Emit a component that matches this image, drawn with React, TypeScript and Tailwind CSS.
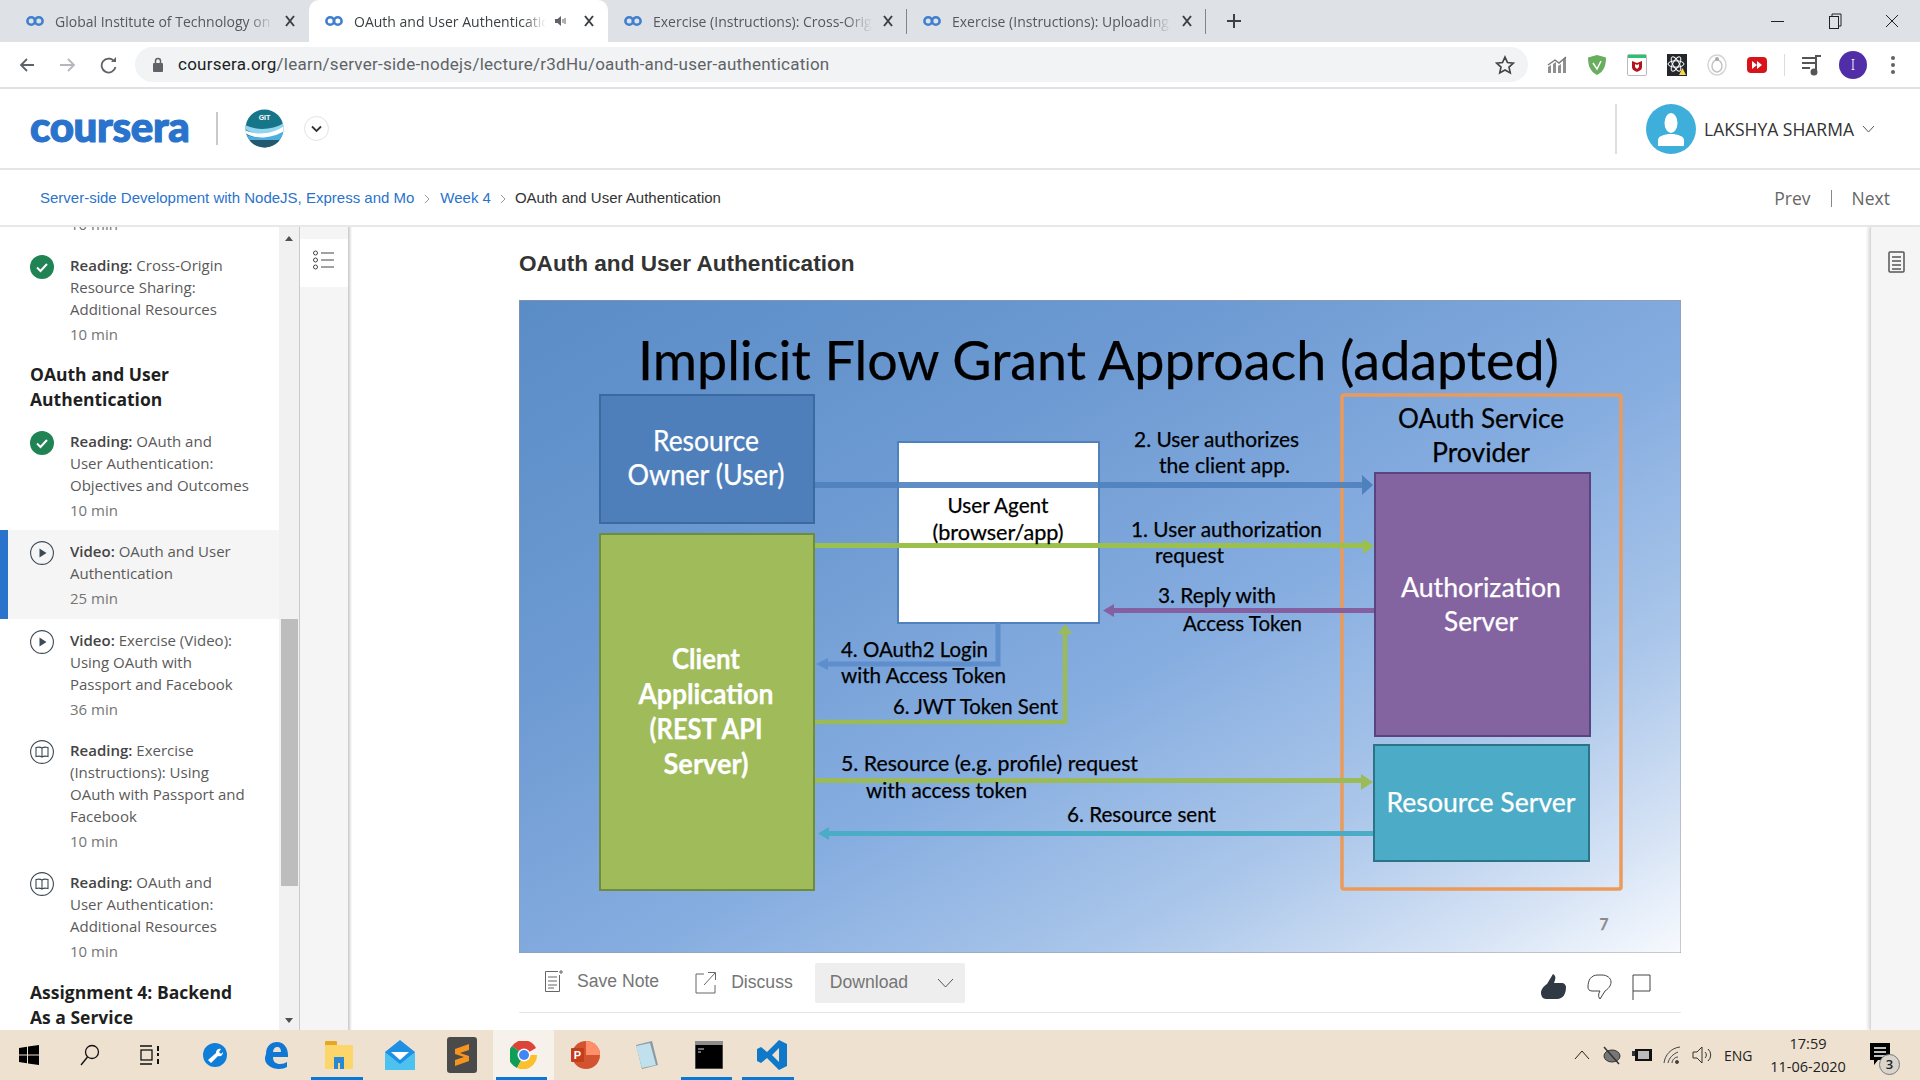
import React from "react";

const Co = () => (
  <svg width="18" height="12" viewBox="0 0 18 12" fill="none" stroke="#3f7fd0" strokeWidth="2.6">
    <circle cx="5.2" cy="6" r="3.8" />
    <circle cx="12.8" cy="6" r="3.8" />
  </svg>
);
const CloseX = () => (
  <svg width="10" height="12" viewBox="0 0 10 12" fill="none" stroke="#3c4043" strokeWidth="2">
    <path d="M1 1l8 10M9 1L1 11" />
  </svg>
);

function Tab({ title, active, audio, sep }: { title: string; active?: boolean; audio?: boolean; sep?: boolean }) {
  return (
    <div className={`relative flex h-[42px] w-[299px] shrink-0 items-center pl-[16px] ${active ? "rounded-t-[10px] bg-white" : ""}`}>
      <Co />
      <div className={`ml-[11px] overflow-hidden whitespace-nowrap text-[14px] [mask-image:linear-gradient(to_right,black_88%,transparent)] ${audio ? "w-[192px] text-[#3c4043]" : "w-[219px] text-[#55585c]"}`}>
        {title}
      </div>
      {audio && (
        <svg className="ml-[9px]" width="12" height="12" viewBox="0 0 12 12">
          <path d="M0 4h2.5L6 1v10L2.5 8H0z" fill="#5f6368" />
          <path d="M8 4v4M10 3v6" stroke="#5f6368" strokeWidth="1" />
        </svg>
      )}
      <div className="absolute left-[275px] top-[15px]">
        <CloseX />
      </div>
      {sep && <div className="absolute right-0 top-[9px] h-[25px] w-px bg-[#80868b]" />}
    </div>
  );
}

const ExtChart = () => (
  <svg width="20" height="20" viewBox="0 0 20 20">
    <path d="M1 18V12l3-2v8zM6 18V9l3-2v11zM11 18V11l3-2v9zM16 18V4l3-2v16z" fill="#8f8f8f" />
    <path d="M1 10l7-5 4 3 7-6" stroke="#777" strokeWidth="1.4" fill="none" />
  </svg>
);
const ExtShield = () => (
  <svg width="20" height="22" viewBox="0 0 20 22">
    <path d="M10 1l9 2.5c0 8-2 14-9 17.5C3 17.500 1 11.500 1 3.500z" fill="#68ae5e" />
    <path d="M6 9l4 6 4-8" stroke="#fff" strokeWidth="1.5" fill="none" />
  </svg>
);
const ExtMc = () => (
  <svg width="20" height="22" viewBox="0 0 20 22">
    <rect x="0.500" y="0.500" width="19" height="21" rx="1.500" fill="#fff" stroke="#bbb" />
    <rect x="1" y="1" width="18" height="3" fill="#25c46f" />
    <path d="M5 7l5 2 5-2v6c0 3-3 4-5 5-2-1-5-2-5-5z" fill="#b5121b" />
    <path d="M8 10l2 1 2-1v3l-2 2-2-2z" fill="#fff" />
  </svg>
);
const ExtReact = () => (
  <svg width="20" height="22" viewBox="0 0 20 22">
    <rect width="20" height="22" fill="#23272c" />
    <g fill="none" stroke="#fff" strokeWidth="1">
      <ellipse cx="9" cy="10" rx="8" ry="3.200" transform="rotate(60 9 10)" />
      <ellipse cx="9" cy="10" rx="8" ry="3.200" transform="rotate(120 9 10)" />
      <ellipse cx="9" cy="10" rx="8" ry="3.200" />
    </g>
    <path d="M12 21l3.500-7 3.500 7z" fill="#f7d747" />
  </svg>
);
const ExtCircle = () => (
  <svg width="20" height="22" viewBox="0 0 20 22" fill="none">
    <ellipse cx="10" cy="11" rx="9" ry="10" stroke="#d5d5d5" strokeWidth="1.500" />
    <ellipse cx="10" cy="12" rx="5" ry="6" stroke="#c4c4c4" strokeWidth="1.500" />
    <circle cx="10" cy="5" r="2" fill="#aaa" />
  </svg>
);
const ExtRed = () => (
  <svg width="20" height="20" viewBox="0 0 20 20">
    <rect x="0" y="2" width="20" height="16" rx="4" fill="#d7141a" />
    <path d="M5 6l5 4-5 4zM10 6l5 4-5 4z" fill="#fff" />
  </svg>
);

function Extension({ children }: { children: React.ReactNode }) {
  return <div className="flex w-[40px] shrink-0 items-center justify-center">{children}</div>;
}

const CheckIcon = () => (
  <svg width="24" height="24" viewBox="0 0 24 24">
    <circle cx="12" cy="12" r="12" fill="#1f8354" />
    <path d="M7 12.500l3.500 3.500L17 9" stroke="#fff" strokeWidth="2" fill="none" />
  </svg>
);
const PlayIcon = () => (
  <svg width="24" height="24" viewBox="0 0 24 24">
    <circle cx="12" cy="12" r="11.400" fill="none" stroke="#3c4a55" strokeWidth="1.100" />
    <path d="M9.500 7.500l7 4.500-7 4.500z" fill="#3c4a55" />
  </svg>
);
const BookIcon = () => (
  <svg width="24" height="24" viewBox="0 0 24 24" fill="none" stroke="#3c4a55" strokeWidth="1.100">
    <circle cx="12" cy="12" r="11.400" />
    <path d="M12 8c-1.500-1-4-1-6-.5v9c2-.5 4.500-.5 6 .5 1.500-1 4-1 6-.5v-9c-2-.5-4.500-.5-6 .5zM12 8v9" />
  </svg>
);

function Item({ icon, kind, title, time, active, tall }: { icon: React.ReactNode; kind: string; title: React.ReactNode; time: string; active?: boolean; tall?: boolean }) {
  return (
    <div className={`relative flex pl-[30px] pt-[10px] ${tall ? "pb-[10px]" : "pb-[9px]"} ${active ? "bg-[#f5f5f5]" : ""}`}>
      {active && <div className="absolute bottom-0 left-0 top-0 w-[8px] bg-[#2a73cc]" />}
      <div className="mt-[1px] w-[40px] shrink-0">{icon}</div>
      <div className="w-[205px] whitespace-nowrap">
        <div className="text-[15px] leading-[22px] text-[#5a5a5a]">
          <span className="font-semibold text-[#444]">{kind}:</span> {title}
        </div>
        <div className="mt-[3px] text-[15px] leading-[22px] text-[#757575]">{time}</div>
      </div>
    </div>
  );
}

function Heading({ children, extra }: { children: React.ReactNode; extra: string }) {
  return <div className={`whitespace-nowrap pb-[8px] pl-[30px] text-[17.5px] font-bold leading-[25px] text-[#1f1f1f] ${extra}`}>{children}</div>;
}

function Sidebar() {
  return (
    <div className="flex h-full w-[352px] shrink-0">
      <div className="h-full w-[279px] shrink-0 overflow-hidden bg-white font-['Open_Sans',sans-serif]">
        <div className="mt-[-14px] pb-[9px] pl-[70px] text-[15px] leading-[22px] text-[#757575]">10 min</div>
        <Item icon={<CheckIcon />} kind="Reading" title={<>Cross-Origin<br />Resource Sharing:<br />Additional Resources</>} time="10 min" />
        <Heading extra="pt-[8px]">OAuth and User<br />Authentication</Heading>
        <Item icon={<CheckIcon />} kind="Reading" title={<>OAuth and<br />User Authentication:<br />Objectives and Outcomes</>} time="10 min" />
        <Item active tall icon={<PlayIcon />} kind="Video" title={<>OAuth and User<br />Authentication</>} time="25 min" />
        <Item icon={<PlayIcon />} kind="Video" title={<>Exercise (Video):<br />Using OAuth with<br />Passport and Facebook</>} time="36 min" />
        <Item icon={<BookIcon />} kind="Reading" title={<>Exercise<br />(Instructions): Using<br />OAuth with Passport and<br />Facebook</>} time="10 min" />
        <Item icon={<BookIcon />} kind="Reading" title={<>OAuth and<br />User Authentication:<br />Additional Resources</>} time="10 min" />
        <Heading extra="pt-[9px]">Assignment 4: Backend<br />As a Service</Heading>
      </div>
      <div className="relative h-full w-[21px] shrink-0 border-r border-[#c9c9c9] bg-[#f1f1f1]">
        <div className="absolute left-[6px] top-[9px] h-0 w-0 border-x-[4.500px] border-b-[5px] border-x-transparent border-b-[#505050]" />
        <div className="ml-[2px] mt-[392px] h-[267px] w-[17px] bg-[#bdbdbd]" />
        <div className="absolute bottom-[7px] left-[6px] h-0 w-0 border-x-[4.500px] border-t-[5px] border-x-transparent border-t-[#505050]" />
      </div>
      <div className="h-full w-[48px] shrink-0 bg-[#f5f5f5] pt-[12px]">
        <div className="flex h-[48px] items-center justify-center bg-white pb-[6px]">
          <svg width="22" height="20" viewBox="0 0 22 20" fill="none" stroke="#444" strokeWidth="1">
            <circle cx="2.500" cy="3" r="2" />
            <circle cx="2.500" cy="10" r="2" />
            <circle cx="2.500" cy="17" r="2" />
            <path d="M8 3h13M8 10h13M8 17h13" />
          </svg>
        </div>
      </div>
      <div className="h-full w-[4px] shrink-0 bg-gradient-to-r from-[#c8c8c8] to-white" />
    </div>
  );
}

function ST({ x, y, w, size, fill = "#000", mid, bold, children }: { x: number; y: number; w: number; size: number; fill?: string; mid?: boolean; bold?: boolean; children: string }) {
  return (
    <text x={x} y={y} textLength={w} lengthAdjust="spacingAndGlyphs" fontSize={size} fill={fill} stroke={fill} strokeWidth={0.25} textAnchor={mid ? "middle" : "start"} fontWeight={bold ? 700 : 400} fontFamily="Lato, sans-serif">
      {children}
    </text>
  );
}

function Slide() {
  return (
    <svg width="1162" height="653" viewBox="519 300 1162 653" className="block">
      <defs>
        <linearGradient id="bg" x1="0" y1="0" x2="1" y2="1">
          <stop offset="0" stopColor="#5a8cc6" />
          <stop offset="0.3" stopColor="#6d9ad2" />
          <stop offset="0.55" stopColor="#86ade0" />
          <stop offset="0.75" stopColor="#aac6ea" />
          <stop offset="0.9" stopColor="#d6e3f5" />
          <stop offset="1" stopColor="#f7fafe" />
        </linearGradient>
      </defs>
      <rect x="519" y="300" width="1162" height="653" fill="url(#bg)" stroke="#9a9a9a" />
      <ST x={638} y={380} w={921} size={54}>Implicit Flow Grant Approach (adapted)</ST>

      <rect x="1342" y="395" width="279" height="494" rx="2" fill="none" stroke="#ec9a5a" strokeWidth="3.500" />

      <rect x="898" y="442" width="201" height="181" fill="#fff" stroke="#4f81bd" strokeWidth="2" />

      <rect x="814" y="482" width="550" height="6" fill="#4f81bd" fillOpacity="0.9" />
      <path d="M1362 475l11 10-11 10z" fill="#4f81bd" />
      <rect x="814" y="543" width="550" height="5" fill="#9bc04c" />
      <path d="M1363 539l11 7-11 8z" fill="#9bc04c" />
      <rect x="1112" y="608" width="262" height="5" fill="#8560a0" />
      <path d="M1114 604l-11 6.500 11 6.500z" fill="#8560a0" />

      <path d="M998 623v41H826" fill="none" stroke="#5e8ecb" strokeWidth="5" />
      <path d="M828 658l-12 6 12 6z" fill="#5e8ecb" />
      <path d="M814 722h251v-90" fill="none" stroke="#9bbb59" strokeWidth="4.500" />
      <path d="M1058 634l7-10 7 10z" fill="#9bbb59" />
      <rect x="814" y="778" width="550" height="5" fill="#9bbb59" />
      <path d="M1361 774l12 8-12 8z" fill="#9bbb59" />
      <rect x="826" y="831" width="548" height="5" fill="#4bacc6" />
      <path d="M829 827l-11 6.500 11 6.500z" fill="#4bacc6" />

      <rect x="600" y="395" width="214" height="128" fill="#4f7fbb" stroke="#3b6aa0" strokeWidth="2" />
      <rect x="600" y="534" width="214" height="356" fill="#9fbb5a" stroke="#6f8c3a" strokeWidth="2" />
      <rect x="1375" y="473" width="215" height="263" fill="#8463a1" stroke="#5a4480" strokeWidth="2" />
      <rect x="1374" y="745" width="215" height="116" fill="#4cabc6" stroke="#2b7486" strokeWidth="2" />

      <ST mid x={706} y={451} w={106} size={28} fill="#fff">Resource</ST>
      <ST mid x={706} y={485} w={157} size={28} fill="#fff">Owner (User)</ST>
      <ST mid x={998} y={513} w={101} size={21}>User Agent</ST>
      <ST mid x={998} y={540} w={131} size={21}>(browser/app)</ST>
      <ST mid bold x={706} y={669} w={68} size={28} fill="#fff">Client</ST>
      <ST mid bold x={706} y={704} w={135} size={28} fill="#fff">Application</ST>
      <ST mid bold x={706} y={739} w={113} size={28} fill="#fff">(REST API</ST>
      <ST mid bold x={706} y={774} w={85} size={28} fill="#fff">Server)</ST>
      <ST x={841} y={657} w={147} size={21}>4. OAuth2 Login</ST>
      <ST x={841} y={683} w={165} size={21}>with Access Token</ST>
      <ST x={893} y={714} w={165} size={21}>6. JWT Token Sent</ST>
      <ST x={841} y={771} w={297} size={21}>5. Resource (e.g. profile) request</ST>
      <ST x={866} y={798} w={161} size={21}>with access token</ST>
      <ST x={1067} y={822} w={149} size={21}>6. Resource sent</ST>
      <ST x={1134} y={447} w={165} size={21}>2. User authorizes</ST>
      <ST x={1159} y={473} w={131} size={21}>the client app.</ST>
      <ST x={1131} y={537} w={191} size={21}>1. User authorization</ST>
      <ST x={1155} y={563} w={69} size={21}>request</ST>
      <ST x={1158} y={603} w={118} size={21}>3. Reply with</ST>
      <ST x={1183} y={631} w={119} size={21}>Access Token</ST>
      <ST mid x={1481} y={428} w={166} size={27}>OAuth Service</ST>
      <ST mid x={1481} y={462} w={98} size={27}>Provider</ST>
      <ST mid x={1481} y={597} w={160} size={27} fill="#fff">Authorization</ST>
      <ST mid x={1481} y={631} w={74} size={27} fill="#fff">Server</ST>
      <ST mid x={1481} y={812} w={189} size={27} fill="#fff">Resource Server</ST>
      <ST mid bold x={1604} y={930} w={9} size={17} fill="#8a8a8a">7</ST>
    </svg>
  );
}

function TaskCell({ children, active, running, extra = "" }: { children?: React.ReactNode; active?: boolean; running?: boolean; extra?: string }) {
  return (
    <div className={`relative flex h-full w-[61.6px] shrink-0 items-center justify-center ${active ? "bg-[#f6f1ea]" : ""} ${extra}`}>
      {children}
      {running && <div className="absolute bottom-0 left-[3px] right-[7px] h-[3px] bg-[#0a78d6]" />}
    </div>
  );
}

export default function App() {
  return (
    <div className="flex h-[1080px] w-[1920px] flex-col overflow-hidden bg-white">
      {/* browser tab strip */}
      <div className="flex h-[42px] shrink-0 bg-[#dee1e6] pl-[10px] font-['Open_Sans',sans-serif]">
        <Tab title="Global Institute of Technology on Coursera" />
        <Tab active audio title="OAuth and User Authentication" />
        <Tab sep title="Exercise (Instructions): Cross-Origin Resource" />
        <Tab sep title="Exercise (Instructions): Uploading Files" />
        <div className="ml-[20px] flex items-center">
          <svg width="16" height="16" viewBox="0 0 16 16" stroke="#3c4043" strokeWidth="2"><path d="M8 1v14M1 8h14" /></svg>
        </div>
        <div className="ml-auto flex items-center">
          <div className="flex w-[57px] justify-center"><div className="h-px w-[13px] bg-[#222]" /></div>
          <div className="flex w-[57px] justify-center">
            <svg width="14" height="16" viewBox="0 0 14 16" fill="none" stroke="#222"><rect x="1.500" y="3.500" width="9" height="12" /><path d="M4 3V1h9v12h-2" /></svg>
          </div>
          <div className="flex w-[57px] justify-center">
            <svg width="14" height="14" viewBox="0 0 14 14" stroke="#222"><path d="M1 1l12 12M13 1L1 13" /></svg>
          </div>
        </div>
      </div>

      {/* browser toolbar */}
      <div className="flex h-[47px] shrink-0 items-start border-b-2 border-[#dfe1e5] bg-white pt-[5px]">
        <div className="flex h-[35px] w-[135px] shrink-0 items-center pl-[18px]">
          <svg width="100" height="18" viewBox="0 0 100 18" fill="none" strokeWidth="1.800">
            <path d="M16 9H3M9 3L3 9l6 6" stroke="#5f6368" />
            <path d="M42 9h14M50 3l6 6-6 6" stroke="#b4b7bb" />
            <path d="M96 5a7 7 0 1 0 1.500 6" stroke="#5f6368" />
            <path d="M98 1v5h-5z" fill="#5f6368" />
          </svg>
        </div>
        <div className="flex h-[35px] w-[1393px] shrink-0 items-center rounded-full bg-[#f1f3f4] pl-[17px] pr-[13px]">
          <svg width="12" height="15" viewBox="0 0 12 15"><rect x="1" y="6" width="10" height="9" rx="1" fill="#5f6368" /><path d="M3.500 6V4a2.500 2.500 0 0 1 5 0v2" fill="none" stroke="#5f6368" strokeWidth="1.500" /></svg>
          <div className="ml-[14px] whitespace-nowrap font-['Roboto',sans-serif] text-[17px] tracking-[0.25px] text-[#5f6368]">
            <span className="text-[#202124]">coursera.org</span>/learn/server-side-nodejs/lecture/r3dHu/oauth-and-user-authentication
          </div>
          <svg className="ml-auto" width="20" height="20" viewBox="0 0 24 24" fill="none" stroke="#444" strokeWidth="2"><path d="M12 2.500l3 6.500 7 .8-5.200 4.700 1.500 7L12 17.900 5.700 21.500l1.500-7L2 9.800 9 9z" /></svg>
        </div>
        <div className="flex h-[35px] items-center pl-[9px]">
          <Extension><ExtChart /></Extension>
          <Extension><ExtShield /></Extension>
          <Extension><ExtMc /></Extension>
          <Extension><ExtReact /></Extension>
          <Extension><ExtCircle /></Extension>
          <Extension><ExtRed /></Extension>
          <div className="ml-[7px] h-[22px] w-px bg-[#dadce0]" />
          <div className="flex w-[54px] justify-center">
            <svg width="22" height="22" viewBox="0 0 22 22" fill="none" stroke="#555" strokeWidth="2"><path d="M1 4h13M1 9h13M1 14h8M15 17V2h5" /><circle cx="13" cy="18" r="2.500" fill="#555" /></svg>
          </div>
          <div className="flex h-[28px] w-[28px] items-center justify-center rounded-full bg-[#512da8] text-[14px] font-light text-white">I</div>
          <div className="ml-[24px] flex flex-col gap-[3px]">
            <div className="h-[4px] w-[4px] rounded-full bg-[#5f6368]" />
            <div className="h-[4px] w-[4px] rounded-full bg-[#5f6368]" />
            <div className="h-[4px] w-[4px] rounded-full bg-[#5f6368]" />
          </div>
        </div>
      </div>

      {/* coursera header */}
      <div className="flex h-[81px] shrink-0 items-center border-b-2 border-[#e5e5e5] pl-[30px]">
        <div className="mb-[6px] w-[160px] whitespace-nowrap font-['Lato',sans-serif] text-[42px] font-black leading-none tracking-[-0.3px] text-[#2a73cc] [-webkit-text-stroke:1.2px_#2a73cc]">coursera</div>
        <div className="ml-[26px] h-[33px] w-[2px] bg-[#c9c9c9]" />
        <svg className="ml-[27px]" width="39" height="39" viewBox="0 0 39 39">
          <defs>
            <clipPath id="ball"><circle cx="19.500" cy="19.500" r="19" /></clipPath>
          </defs>
          <g clipPath="url(#ball)">
            <rect width="39" height="39" fill="#17758a" />
            <path d="M0 16c10 5 26 6 39-2v8C26 30 10 26 0 20z" fill="#8fd6ee" />
            <path d="M0 21c12 6 28 4 39-4v6C28 32 10 30 0 24z" fill="#fff" />
            <path d="M0 25c12 6 28 4 39-3v6C28 36 12 34 0 29z" fill="#4daee0" />
            <rect y="31" width="39" height="8" fill="#23586f" />
          </g>
          <text x="19.500" y="11" textAnchor="middle" fontSize="7" fontWeight="700" fill="#fff" fontFamily="Liberation Sans, sans-serif">GIT</text>
        </svg>
        <div className="ml-[20px] flex h-[25px] w-[25px] items-center justify-center rounded-full border border-[#e3e3e3]">
          <svg width="11" height="8" viewBox="0 0 11 8" fill="none" stroke="#333" strokeWidth="1.800"><path d="M1 1.500l4.500 4.500L10 1.500" /></svg>
        </div>
        <div className="ml-auto flex items-center pt-[1px]">
          <div className="h-[50px] w-[2px] bg-[#dedede]" />
          <div className="ml-[29px] flex h-[50px] w-[50px] items-center justify-center overflow-hidden rounded-full bg-[#3eaedb]">
            <svg width="50" height="50" viewBox="0 0 50 50" fill="#fff"><ellipse cx="25" cy="19" rx="6.500" ry="10" /><path d="M12 42v-6c0-4 6-5 10-6h6c4 1 10 2 10 6v6z" /></svg>
          </div>
          <div className="ml-[8px] w-[149px] whitespace-nowrap font-['Open_Sans',sans-serif] text-[17.5px] text-[#333]">LAKSHYA SHARMA</div>
          <svg className="ml-[9px] mr-[45px]" width="13" height="8" viewBox="0 0 13 8" fill="none" stroke="#555"><path d="M1 1l5.500 6L12 1" /></svg>
        </div>
      </div>

      {/* breadcrumb */}
      <div className="flex h-[57px] shrink-0 items-center border-b-2 border-[#e8e8e8] pl-[40px] pt-[2px] font-['Liberation_Sans',sans-serif] text-[15px]">
        <span className="text-[#2a73cc]">Server-side Development with NodeJS, Express and Mo</span>
        <svg className="ml-[10px] mr-[10px]" width="6" height="10" viewBox="0 0 6 10" fill="none" stroke="#999"><path d="M1 1l4 4-4 4" /></svg>
        <span className="text-[#2a73cc]">Week 4</span>
        <svg className="ml-[9px] mr-[9px]" width="6" height="10" viewBox="0 0 6 10" fill="none" stroke="#999"><path d="M1 1l4 4-4 4" /></svg>
        <span className="text-[#333]">OAuth and User Authentication</span>
        <div className="ml-auto flex items-center pr-[30px] font-['Open_Sans',sans-serif] text-[17.5px] text-[#666]">
          <span>Prev</span>
          <div className="mx-[20px] h-[17px] w-px bg-[#888]" />
          <span>Next</span>
        </div>
      </div>

      {/* course body */}
      <div className="flex min-h-0 flex-1">
        <Sidebar />
        <div className="min-w-0 flex-1 pl-[167px] font-['Liberation_Sans',sans-serif]">
          <div className="flex h-[73px] items-center pt-[1px] text-[22.6px] font-bold text-[#333]">OAuth and User Authentication</div>
          <Slide />
          <div className="flex h-[60px] w-[1162px] items-center border-b border-[#e5e5e5] pl-[25px] text-[17.6px] text-[#757575]">
            <svg className="mb-[4px]" width="20" height="23" viewBox="0 0 20 23" fill="none" stroke="#666"><path d="M14 2.500H1.500v20h14V6" /><path d="M4 8h9M4 12h9M4 16h9M4 19h6" /><path d="M17 1v4M15 3h4" /></svg>
            <span className="mb-[2px] ml-[13px]">Save Note</span>
            <svg className="ml-[36px]" width="22" height="23" viewBox="0 0 22 23" fill="none" stroke="#666"><path d="M9 3H1v19h19v-8" /><path d="M9 14L20 2M13 1.500h7.500V9" /></svg>
            <span className="ml-[14px]">Discuss</span>
            <div className="ml-[22px] flex h-[40px] w-[150px] items-center justify-between rounded-[2px] bg-[#eeeeee] pl-[15px] pr-[11px]">
              <span>Download</span>
              <svg width="17" height="10" viewBox="0 0 17 10" fill="none" stroke="#555"><path d="M1 1l7.500 8L16 1" /></svg>
            </div>
            <svg className="ml-auto mt-[8px]" width="25" height="25" viewBox="0 0 25 25" fill="#2f3a44"><path d="M12 0c2 1 3 3 2 6l-1 3h8c2 0 4 2 4 4 0 7-3 12-9 12H5c-3 0-5-3-5-6 0-4 3-7 6-9z" /></svg>
            <svg className="ml-[21px] mt-[8px]" width="25" height="26" viewBox="0 0 25 26" fill="none" stroke="#444"><path d="M13 25c-1-1-2-3-1-6l1-2H5C2 17 1 15 1 13 1 6 4 1 11 1h4c5 0 9 3 9 7 0 4-3 7-6 9z" /></svg>
            <svg className="ml-[20px] mr-[30px] mt-[8px]" width="19" height="26" viewBox="0 0 19 26" fill="none" stroke="#444"><path d="M1 26V1h17v16H1" /></svg>
          </div>
        </div>
        <div className="h-full w-[50px] shrink-0 border-l border-[#d8d8d8] bg-[#f5f5f5] pl-[17px] pt-[24px] shadow-[-2px_0_3px_#ddd]">
          <svg width="17" height="22" viewBox="0 0 17 22" fill="none" stroke="#555" strokeWidth="1.500"><rect x="1" y="1" width="15" height="20" rx="1" /><path d="M4 6h9M4 10h9M4 14h9M4 18h9" /></svg>
        </div>
      </div>

      {/* windows taskbar */}
      <div className="flex h-[50px] shrink-0 items-stretch bg-[#eee1d0] font-['Open_Sans',sans-serif]">
        <TaskCell extra="pr-[3px]">
          <svg width="20" height="20" viewBox="0 0 20 20" fill="#000"><path d="M0 3l8-1.200V9.500H0zM9 1.600L20 0v9.500H9zM0 10.500h8v7.800L0 17zM9 10.500h11V20L9 18.400z" /></svg>
        </TaskCell>
        <TaskCell extra="pr-[5px]">
          <svg width="20" height="22" viewBox="0 0 20 22" fill="none" stroke="#111" strokeWidth="1.300"><circle cx="12" cy="8" r="6.500" /><path d="M7.500 13L1 21" /></svg>
        </TaskCell>
        <TaskCell extra="pr-[7px]">
          <svg width="20" height="20" viewBox="0 0 20 20" fill="none" stroke="#111" strokeWidth="1.300"><path d="M0 1h12M0 19h12" /><rect x="1" y="5" width="11" height="10" /><path d="M18 1v5M18 8v3M18 14v5" strokeWidth="2" /></svg>
        </TaskCell>
        <TaskCell extra="pr-[2px]">
          <svg width="24" height="24" viewBox="0 0 24 24"><circle cx="12" cy="12" r="12" fill="#0f7ed8" /><path d="M5 17l8-7c0-3 2-5 5-4l-2 3 2 2 2-2c0 3-2 5-5 4l-7 7z" fill="#fff" /></svg>
        </TaskCell>
        <TaskCell extra="pr-[2px]">
          <svg width="26" height="28" viewBox="0 0 26 28"><path d="M3 13C3 5 8 1 14 1c7 0 11 6 11 13v2H10c0 5 3 7 7 7 3 0 5-1 7-2v5c-2 1-5 2-8 2C7 28-1 22 3 13zM10 11h8c0-3-1-5-4-5-2 0-4 2-4 5z" fill="#0f78d4" /></svg>
        </TaskCell>
        <TaskCell running>
          <svg width="28" height="28" viewBox="0 0 28 28"><rect x="0" y="0" width="12" height="6" rx="1" fill="#e6a823" /><rect x="0" y="4" width="28" height="24" rx="1" fill="#fcd66a" /><path d="M9 28V16h10v12h-4v-6h-2v6z" fill="#2b88d8" /></svg>
        </TaskCell>
        <TaskCell>
          <svg width="30" height="30" viewBox="0 0 30 30"><path d="M0 12L15 0l15 12v18H0z" fill="#1f8fe3" /><path d="M0 12l15 12 15-12v18H0z" fill="#4cc2f1" /><path d="M6 12h18l-9 8z" fill="#fff" /></svg>
        </TaskCell>
        <TaskCell>
          <svg width="30" height="36" viewBox="0 0 30 36"><rect width="30" height="36" rx="3" fill="#4a4a4a" /><path d="M22 7L8 12v5l9 3-9 3v6l14-5v-5l-9-3 9-3z" fill="#f7941e" /></svg>
        </TaskCell>
        <TaskCell active running>
          <svg width="28" height="28" viewBox="0 0 28 28">
            <path d="M14 14L2 5a14 14 0 0 1 24 2z" fill="#db4437" />
            <path d="M14 14l-7 13A14 14 0 0 1 2 5z" fill="#0f9d58" />
            <path d="M14 14h13a14 14 0 0 1-20 13z" fill="#fbc02d" />
            <circle cx="14" cy="14" r="6.500" fill="#fff" />
            <circle cx="14" cy="14" r="5" fill="#4285f4" />
          </svg>
        </TaskCell>
        <TaskCell>
          <svg width="30" height="30" viewBox="0 0 30 30"><circle cx="16" cy="15" r="14" fill="#d35230" /><path d="M16 1a14 14 0 0 1 14 14H16z" fill="#ff8f6b" /><rect x="1" y="8" width="13" height="14" rx="1" fill="#c43e1c" /><text x="7.500" y="19" textAnchor="middle" fontSize="11" fontWeight="700" fill="#fff" fontFamily="Liberation Sans, sans-serif">P</text></svg>
        </TaskCell>
        <TaskCell>
          <svg width="26" height="30" viewBox="0 0 26 30"><path d="M2 5l16-4 6 24-16 4z" fill="#8a9ba3" /><path d="M2 6l14-3 6 22-14 3z" fill="#bfe0ec" /></svg>
        </TaskCell>
        <TaskCell running extra="pl-[2px]">
          <svg width="28" height="28" viewBox="0 0 28 28"><rect width="28" height="28" fill="#000" stroke="#8d8d8d" /><rect x="0" y="0" width="28" height="4" fill="#8d8d8d" /><path d="M3 8h6M3 11h3" stroke="#ddd" /></svg>
        </TaskCell>
        <TaskCell running extra="pl-[4px]">
          <svg width="30" height="30" viewBox="0 0 30 30"><path d="M22 0l8 4v22l-8 4-12-12-6 5-4-2V9l4-2 6 5zM22 8l-7 7 7 7z" fill="#0f78c9" /></svg>
        </TaskCell>
        <div className="ml-auto flex items-center pr-[30px] text-[#222]">
          <svg width="16" height="10" viewBox="0 0 16 10" fill="none" stroke="#222"><path d="M1 9l7-8 7 8" /></svg>
          <svg className="ml-[12px]" width="20" height="20" viewBox="0 0 20 20" fill="none" stroke="#333"><ellipse cx="10" cy="11" rx="8" ry="6" fill="#777" /><path d="M2 2l15 17" strokeWidth="1.500" /></svg>
          <svg className="ml-[10px]" width="20" height="14" viewBox="0 0 20 14"><rect x="3" y="1" width="17" height="12" fill="#111" /><rect x="6" y="3" width="11" height="8" fill="#bbb" /><path d="M0 3h3v5H0z" fill="#333" /></svg>
          <svg className="ml-[11px]" width="18" height="18" viewBox="0 0 18 18" fill="none" stroke="#444"><path d="M1 17C2 9 8 2 17 1M5 17c1-5 5-9 10-11M9 17c0-3 3-6 6-6" /><circle cx="14" cy="16" r="1.500" fill="#444" /></svg>
          <svg className="ml-[11px]" width="20" height="22" viewBox="0 0 20 22" fill="none" stroke="#333"><path d="M1 8h4l5-5v16l-5-5H1z" /><path d="M13 8a4 4 0 0 1 0 6M16 5a8 8 0 0 1 0 12" /></svg>
          <span className="ml-[12px] w-[32px] text-[14px]">ENG</span>
          <div className="ml-[12px] flex w-[80px] flex-col items-center gap-[4px] text-[14.5px] leading-[19px]">
            <span>17:59</span>
            <span>11-06-2020</span>
          </div>
          <div className="relative ml-[22px] h-[24px] w-[20px]">
            <svg width="20" height="24" viewBox="0 0 20 24"><path d="M0 0h20v17H8l-4 5v-5H0z" fill="#000" /><path d="M4 5h12M4 9h12M4 13h12" stroke="#fff" strokeWidth="1.300" /></svg>
            <div className="absolute left-[9px] top-[11px] flex h-[21px] w-[21px] items-center justify-center rounded-full border border-[#777] bg-[#d9d4cc] text-[13px] font-semibold">3</div>
          </div>
        </div>
      </div>
    </div>
  );
}
